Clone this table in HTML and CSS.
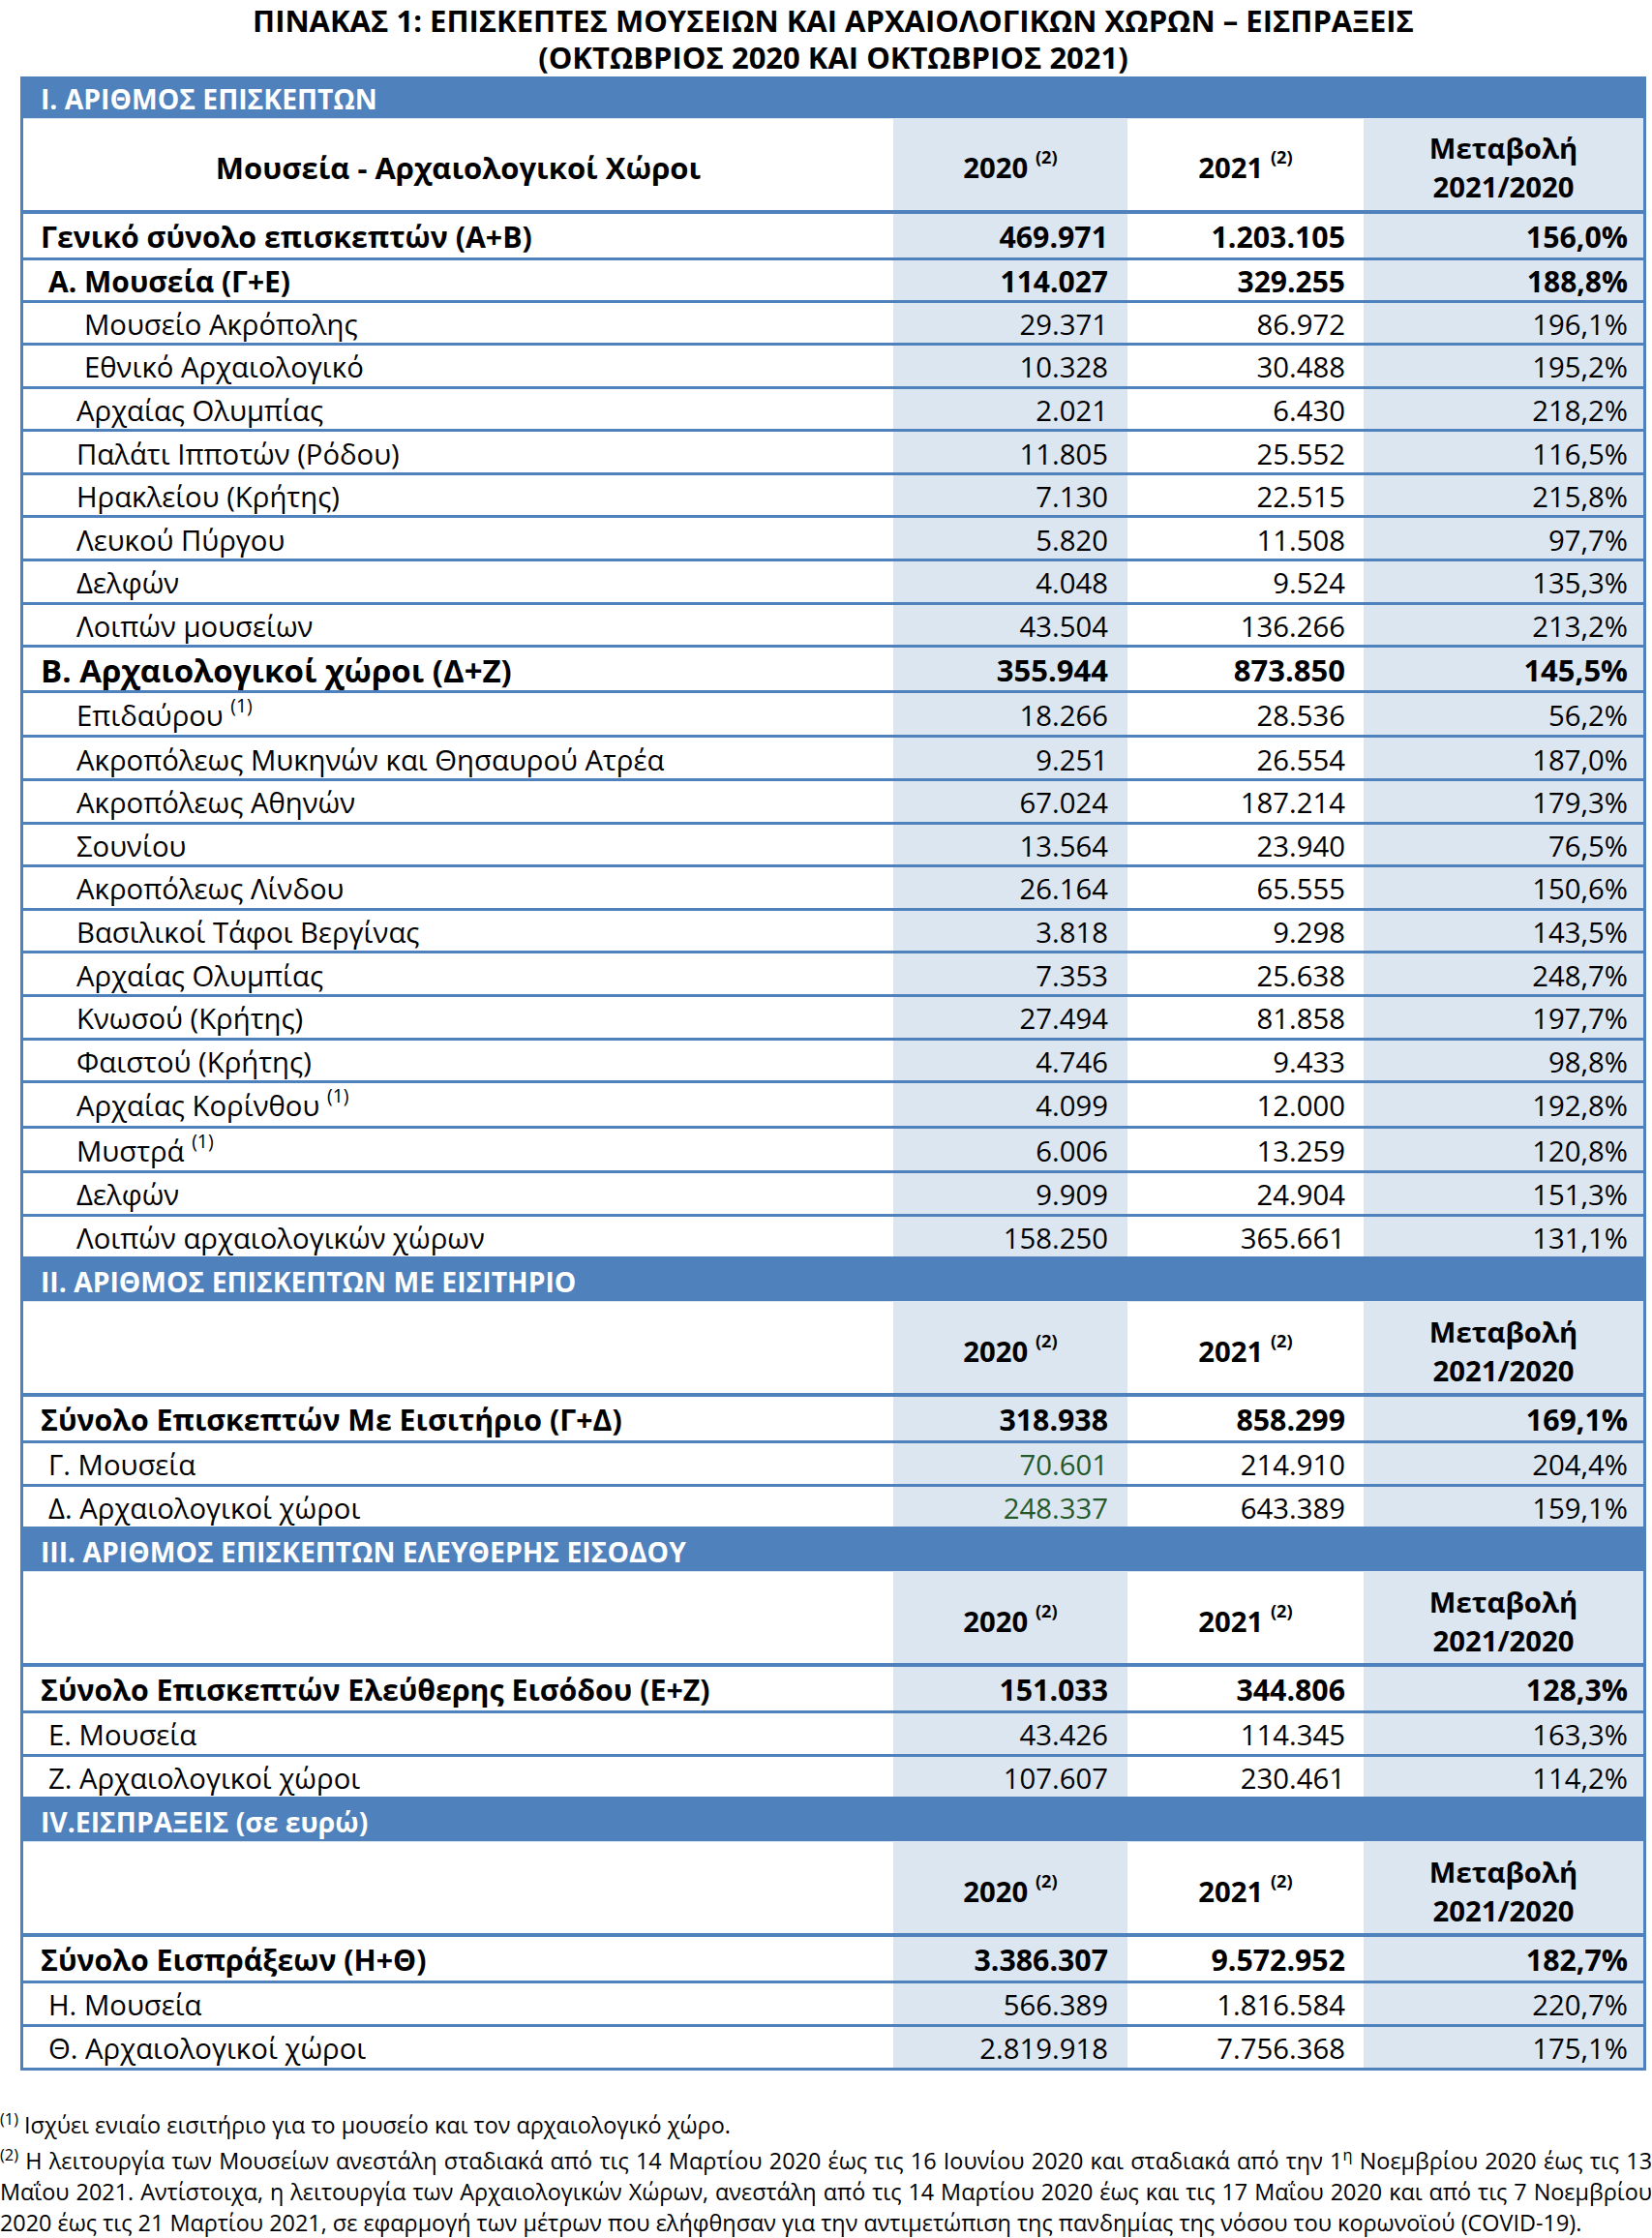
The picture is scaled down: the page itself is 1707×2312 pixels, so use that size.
FILE: index.html
```html
<!DOCTYPE html>
<html lang="el">

<head>
    <meta charset="UTF-8">
    <meta name="viewport" content="width=device-width, initial-scale=1.0">
    <title>Πίνακας 1: Επισκέπτες μουσείων και αρχαιολογικών χώρων</title>
    <link rel="stylesheet" href="styles.css">
</head>

<body>
    <h1 class="title">
        <span class="tline">ΠΙΝΑΚΑΣ 1: ΕΠΙΣΚΕΠΤΕΣ ΜΟΥΣΕΙΩΝ ΚΑΙ ΑΡΧΑΙΟΛΟΓΙΚΩΝ ΧΩΡΩΝ – ΕΙΣΠΡΑΞΕΙΣ</span>
        <span class="tline">(ΟΚΤΩΒΡΙΟΣ 2020 ΚΑΙ ΟΚΤΩΒΡΙΟΣ 2021)</span>
    </h1>

    <table class="stats">
        <colgroup>
            <col class="c-label">
            <col class="c-y1">
            <col class="c-y2">
            <col class="c-chg">
        </colgroup>

        <!-- I -->
        <tr class="sec"><td colspan="4">I. ΑΡΙΘΜΟΣ ΕΠΙΣΚΕΠΤΩΝ</td></tr>
        <tr class="head">
            <td class="label center">Μουσεία - Αρχαιολογικοί Χώροι</td>
            <td class="y1">2020 <sup>(2)</sup></td>
            <td class="y2">2021 <sup>(2)</sup></td>
            <td class="chg">Μεταβολή<br>2021/2020</td>
        </tr>
        <tr class="total">
            <td class="label">Γενικό σύνολο επισκεπτών (Α+Β)</td>
            <td class="y1">469.971</td><td class="y2">1.203.105</td><td class="chg">156,0%</td>
        </tr>
        <tr class="sub">
            <td class="label l1">Α. Μουσεία (Γ+Ε)</td>
            <td class="y1">114.027</td><td class="y2">329.255</td><td class="chg">188,8%</td>
        </tr>
        <tr class="row">
            <td class="label l3">Μουσείο Ακρόπολης</td>
            <td class="y1">29.371</td><td class="y2">86.972</td><td class="chg">196,1%</td>
        </tr>
        <tr class="row">
            <td class="label l3">Εθνικό Αρχαιολογικό</td>
            <td class="y1">10.328</td><td class="y2">30.488</td><td class="chg">195,2%</td>
        </tr>
        <tr class="row">
            <td class="label l2">Αρχαίας Ολυμπίας</td>
            <td class="y1">2.021</td><td class="y2">6.430</td><td class="chg">218,2%</td>
        </tr>
        <tr class="row">
            <td class="label l2">Παλάτι Ιπποτών (Ρόδου)</td>
            <td class="y1">11.805</td><td class="y2">25.552</td><td class="chg">116,5%</td>
        </tr>
        <tr class="row">
            <td class="label l2">Ηρακλείου (Κρήτης)</td>
            <td class="y1">7.130</td><td class="y2">22.515</td><td class="chg">215,8%</td>
        </tr>
        <tr class="row">
            <td class="label l2">Λευκού Πύργου</td>
            <td class="y1">5.820</td><td class="y2">11.508</td><td class="chg">97,7%</td>
        </tr>
        <tr class="row">
            <td class="label l2">Δελφών</td>
            <td class="y1">4.048</td><td class="y2">9.524</td><td class="chg">135,3%</td>
        </tr>
        <tr class="row">
            <td class="label l2">Λοιπών μουσείων</td>
            <td class="y1">43.504</td><td class="y2">136.266</td><td class="chg">213,2%</td>
        </tr>
        <tr class="sub big">
            <td class="label">Β. Αρχαιολογικοί χώροι (Δ+Ζ)</td>
            <td class="y1">355.944</td><td class="y2">873.850</td><td class="chg">145,5%</td>
        </tr>
        <tr class="row note">
            <td class="label l2">Επιδαύρου <sup>(1)</sup></td>
            <td class="y1">18.266</td><td class="y2">28.536</td><td class="chg">56,2%</td>
        </tr>
        <tr class="row">
            <td class="label l2">Ακροπόλεως Μυκηνών και Θησαυρού Ατρέα</td>
            <td class="y1">9.251</td><td class="y2">26.554</td><td class="chg">187,0%</td>
        </tr>
        <tr class="row">
            <td class="label l2">Ακροπόλεως Αθηνών</td>
            <td class="y1">67.024</td><td class="y2">187.214</td><td class="chg">179,3%</td>
        </tr>
        <tr class="row">
            <td class="label l2">Σουνίου</td>
            <td class="y1">13.564</td><td class="y2">23.940</td><td class="chg">76,5%</td>
        </tr>
        <tr class="row">
            <td class="label l2">Ακροπόλεως Λίνδου</td>
            <td class="y1">26.164</td><td class="y2">65.555</td><td class="chg">150,6%</td>
        </tr>
        <tr class="row">
            <td class="label l2">Βασιλικοί Τάφοι Βεργίνας</td>
            <td class="y1">3.818</td><td class="y2">9.298</td><td class="chg">143,5%</td>
        </tr>
        <tr class="row">
            <td class="label l2">Αρχαίας Ολυμπίας</td>
            <td class="y1">7.353</td><td class="y2">25.638</td><td class="chg">248,7%</td>
        </tr>
        <tr class="row">
            <td class="label l2">Κνωσού (Κρήτης)</td>
            <td class="y1">27.494</td><td class="y2">81.858</td><td class="chg">197,7%</td>
        </tr>
        <tr class="row">
            <td class="label l2">Φαιστού (Κρήτης)</td>
            <td class="y1">4.746</td><td class="y2">9.433</td><td class="chg">98,8%</td>
        </tr>
        <tr class="row note">
            <td class="label l2">Αρχαίας Κορίνθου <sup>(1)</sup></td>
            <td class="y1">4.099</td><td class="y2">12.000</td><td class="chg">192,8%</td>
        </tr>
        <tr class="row note">
            <td class="label l2">Μυστρά <sup>(1)</sup></td>
            <td class="y1">6.006</td><td class="y2">13.259</td><td class="chg">120,8%</td>
        </tr>
        <tr class="row">
            <td class="label l2">Δελφών</td>
            <td class="y1">9.909</td><td class="y2">24.904</td><td class="chg">151,3%</td>
        </tr>
        <tr class="row">
            <td class="label l2">Λοιπών αρχαιολογικών χώρων</td>
            <td class="y1">158.250</td><td class="y2">365.661</td><td class="chg">131,1%</td>
        </tr>

        <!-- II -->
        <tr class="sec"><td colspan="4">II. ΑΡΙΘΜΟΣ ΕΠΙΣΚΕΠΤΩΝ ΜΕ ΕΙΣΙΤΗΡΙΟ</td></tr>
        <tr class="head">
            <td class="label"></td>
            <td class="y1">2020 <sup>(2)</sup></td>
            <td class="y2">2021 <sup>(2)</sup></td>
            <td class="chg">Μεταβολή<br>2021/2020</td>
        </tr>
        <tr class="total">
            <td class="label">Σύνολο Επισκεπτών Με Εισιτήριο (Γ+Δ)</td>
            <td class="y1">318.938</td><td class="y2">858.299</td><td class="chg">169,1%</td>
        </tr>
        <tr class="row mid">
            <td class="label l1">Γ. Μουσεία</td>
            <td class="y1 green">70.601</td><td class="y2">214.910</td><td class="chg">204,4%</td>
        </tr>
        <tr class="row">
            <td class="label l1">Δ. Αρχαιολογικοί χώροι</td>
            <td class="y1 green">248.337</td><td class="y2">643.389</td><td class="chg">159,1%</td>
        </tr>

        <!-- III -->
        <tr class="sec"><td colspan="4">III. ΑΡΙΘΜΟΣ ΕΠΙΣΚΕΠΤΩΝ ΕΛΕΥΘΕΡΗΣ ΕΙΣΟΔΟΥ</td></tr>
        <tr class="head">
            <td class="label"></td>
            <td class="y1">2020 <sup>(2)</sup></td>
            <td class="y2">2021 <sup>(2)</sup></td>
            <td class="chg">Μεταβολή<br>2021/2020</td>
        </tr>
        <tr class="total">
            <td class="label">Σύνολο Επισκεπτών Ελεύθερης Εισόδου (Ε+Ζ)</td>
            <td class="y1">151.033</td><td class="y2">344.806</td><td class="chg">128,3%</td>
        </tr>
        <tr class="row mid">
            <td class="label l1">Ε. Μουσεία</td>
            <td class="y1">43.426</td><td class="y2">114.345</td><td class="chg">163,3%</td>
        </tr>
        <tr class="row">
            <td class="label l1">Ζ. Αρχαιολογικοί χώροι</td>
            <td class="y1">107.607</td><td class="y2">230.461</td><td class="chg">114,2%</td>
        </tr>

        <!-- IV -->
        <tr class="sec"><td colspan="4">IV.ΕΙΣΠΡΑΞΕΙΣ (σε ευρώ)</td></tr>
        <tr class="head">
            <td class="label"></td>
            <td class="y1">2020 <sup>(2)</sup></td>
            <td class="y2">2021 <sup>(2)</sup></td>
            <td class="chg">Μεταβολή<br>2021/2020</td>
        </tr>
        <tr class="total">
            <td class="label">Σύνολο Εισπράξεων (Η+Θ)</td>
            <td class="y1">3.386.307</td><td class="y2">9.572.952</td><td class="chg">182,7%</td>
        </tr>
        <tr class="row mid">
            <td class="label l1">Η. Μουσεία</td>
            <td class="y1">566.389</td><td class="y2">1.816.584</td><td class="chg">220,7%</td>
        </tr>
        <tr class="row">
            <td class="label l1">Θ. Αρχαιολογικοί χώροι</td>
            <td class="y1">2.819.918</td><td class="y2">7.756.368</td><td class="chg">175,1%</td>
        </tr>
    </table>

    <div class="notes">
        <p><sup>(1)</sup> Ισχύει ενιαίο εισιτήριο για το μουσείο και τον αρχαιολογικό χώρο.</p>
        <p class="second">
            <span class="line"><sup>(2)</sup> Η λειτουργία των Μουσείων ανεστάλη σταδιακά από τις 14 Μαρτίου 2020 έως τις 16 Ιουνίου 2020 και σταδιακά από την 1<sup>η</sup> Νοεμβρίου 2020 έως τις 13</span>
            <span class="line">Μαΐου 2021. Αντίστοιχα, η λειτουργία των Αρχαιολογικών Χώρων, ανεστάλη από τις 14 Μαρτίου 2020 έως και τις 17 Μαΐου 2020 και από τις 7 Νοεμβρίου</span>
            <span class="line last">2020 έως τις 21 Μαρτίου 2021, σε εφαρμογή των μέτρων που ελήφθησαν για την αντιμετώπιση της πανδημίας της νόσου του κορωνοϊού (COVID-19).</span>
        </p>
    </div>
</body>

</html>
```

FILE: styles.css
```css
* {
    margin: 0;
    padding: 0;
    box-sizing: border-box;
}

body {
    width: 1707px;
    font-family: "Open Sans", "Noto Sans", sans-serif;
    color: #000;
    background: #fff;
}

sup {
    line-height: 0;
    font-size: 0.66em;
    vertical-align: 0.7em;
}

/* title */
.title {
    width: 1680px;
    margin: 0 0 -2px 21px;
    font-size: 31px;
    font-weight: 700;
    text-align: center;
}

.tline {
    display: block;
    line-height: 43px;
}

.tline + .tline {
    margin-top: -5px;
}

/* table */
.stats {
    width: 1680px;
    margin-left: 21px;
    table-layout: fixed;
    border-collapse: separate;
    border-spacing: 0;
    border-left: 3px solid #4f81bd;
    border-right: 3px solid #4f81bd;
}

.c-label {
    width: 899px;
}

.c-y1 {
    width: 242px;
}

.c-y2 {
    width: 244px;
}

.c-chg {
    width: 289px;
}

.stats td {
    font-size: 29.3px;
    line-height: 1.2;
    padding-top: 4px;
    vertical-align: middle;
    white-space: nowrap;
    border-bottom: 3px solid #4f81bd;
}

.stats .y1,
.stats .chg {
    background: #dce6f1;
}

.stats .y1 {
    text-align: right;
    padding-right: 20px;
}

.stats .y2 {
    text-align: right;
    padding-right: 19px;
}

.stats .chg {
    text-align: right;
    padding-right: 16px;
}

.stats .label {
    padding-left: 18px;
}

.stats .l1 {
    padding-left: 26px;
}

.stats .l2 {
    padding-left: 55px;
}

.stats .l3 {
    padding-left: 63px;
}

.stats .green {
    color: #24592a;
}

/* section bars */
.sec {
    height: 44px;
}

.stats .sec td {
    background: #4f81bd;
    color: #fff;
    font-size: 28.3px;
    font-weight: 700;
    padding-left: 18px;
    border-bottom: 1px solid #dce6f1;
}

/* column headings */
.head {
    height: 97.5px;
}

.stats .head td {
    font-weight: 700;
    text-align: center;
    padding-right: 0;
    padding-top: 7px;
    line-height: 40px;
    border-bottom-width: 4px;
}

.stats .head .label {
    font-size: 31px;
    padding-left: 0;
}

.stats .head sup {
    font-size: 0.62em;
    vertical-align: 0.85em;
}

/* rows */
.total {
    height: 48px;
}

.stats .total td {
    font-size: 30.3px;
    font-weight: 700;
}

.sub {
    height: 44px;
}

.sub.big {
    height: 46px;
}

.stats .sub td {
    font-size: 30px;
    font-weight: 700;
}

.stats .sub.big td {
    font-size: 31px;
}

.stats .sub.big .label {
    font-size: 33px;
}

.row {
    height: 44.6px;
}

.row.note {
    height: 46.5px;
}

.row.mid {
    height: 45px;
}

/* footnotes */
.notes {
    width: 1707px;
    margin-top: 40px;
    font-size: 23.4px;
    line-height: 32px;
}

.notes sup {
    font-size: 0.7em;
    vertical-align: 0.55em;
}

.notes .second {
    margin-top: 5px;
}

.notes .line {
    display: block;
    text-align: justify;
    text-align-last: justify;
}

.notes .line.last {
    text-align-last: left;
}
```
